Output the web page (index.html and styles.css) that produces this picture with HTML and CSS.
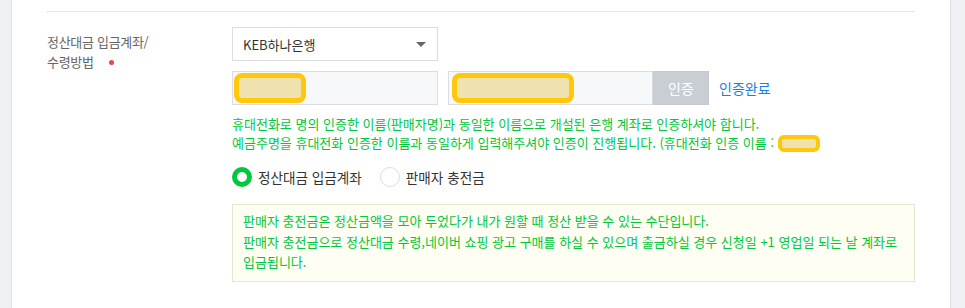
FILE: index.html
```html
<!DOCTYPE html>
<html lang="ko">
<head>
<meta charset="UTF-8">
<meta name="viewport" content="width=device-width, initial-scale=1.0">
<link rel="stylesheet" href="styles.css">
<title>정산대금 입금계좌</title>
</head>
<body>
  <div class="page">
    <div class="side side-left"></div>
    <div class="main">
      <div class="row">
        <div class="label">정산대금 입금계좌/<br>수령방법 <span class="required"></span></div>
        <div class="field">
          <div class="select">
            <span>KEB하나은행</span>
            <span class="arrow"></span>
          </div>
          <div class="account-row">
            <div class="input"><span class="mask mask-name"></span></div>
            <div class="input input-account"><span class="mask mask-account"></span></div>
            <button class="btn-verify">인증</button>
            <a class="verified" href="#">인증완료</a>
          </div>
          <p class="notice">
            휴대전화로 명의 인증한 이름(판매자명)과 동일한 이름으로 개설된 은행 계좌로 인증하셔야 합니다.<br>
            예금주명을 휴대전화 인증한 이름과 동일하게 입력해주셔야 인증이 진행됩니다. (휴대전화 인증 이름 : <span class="mask mask-inline"></span>
          </p>
          <div class="radios">
            <label class="radio checked"><span class="circle"></span>정산대금 입금계좌</label>
            <label class="radio"><span class="circle"></span>판매자 충전금</label>
          </div>
          <div class="info-box">
            판매자 충전금은 정산금액을 모아 두었다가 내가 원할 때 정산 받을 수 있는 수단입니다.<br>
            판매자 충전금으로 정산대금 수령,네이버 쇼핑 광고 구매를 하실 수 있으며 출금하실 경우 신청일 +1 영업일 되는 날 계좌로 입금됩니다.
          </div>
        </div>
      </div>
    </div>
    <div class="side side-right"></div>
  </div>
</body>
</html>
```

FILE: styles.css
```css
body {
  margin: 0;
  padding: 0;
  font-family: "Noto Sans CJK KR", "Noto Sans", sans-serif;
  background-color: #fff;
}

.page {
  display: flex;
  height: 308px;
  overflow: hidden;
}

.side {
  background-color: #eef0f4;
}

.side-left {
  width: 11px;
  border-right: 1px solid #e0e3e8;
}

.side-right {
  width: 14px;
  border-left: 1px solid #dcdfe5;
}

.main {
  flex: 1;
  padding: 0 35px;
}

.row {
  display: flex;
  margin-top: 11px;
  border-top: 1px solid #e5e5eb;
  padding-top: 15px;
}

.label {
  width: 185px;
  padding-top: 5px;
  font-size: 13px;
  line-height: 20px;
  color: #666;
  letter-spacing: -0.3px;
}

.required {
  display: inline-block;
  width: 5px;
  height: 5px;
  margin-left: 12px;
  border-radius: 50%;
  background-color: #f0434f;
  vertical-align: 2px;
}

.field {
  flex: 1;
}

.select {
  width: 206px;
  height: 34px;
  box-sizing: border-box;
  border: 1px solid #dcdde2;
  display: flex;
  align-items: center;
  justify-content: space-between;
  padding: 0 11px 0 10px;
  font-size: 13px;
  color: #333;
}

.arrow {
  width: 0;
  height: 0;
  border-left: 5px solid transparent;
  border-right: 5px solid transparent;
  border-top: 5px solid #666;
}

.account-row {
  display: flex;
  align-items: center;
  margin-top: 10px;
}

.input {
  width: 206px;
  height: 34px;
  box-sizing: border-box;
  border: 1px solid #dcdde2;
  background-color: #f7f8fa;
  display: flex;
  align-items: center;
  padding-left: 1px;
}

.input-account {
  width: 205px;
  margin-left: 10px;
  padding-left: 3px;
}

.mask {
  display: inline-block;
  box-sizing: border-box;
  border: 5px solid #ffc80a;
  background-color: #efe2ae;
  border-radius: 8px;
}

.mask-name {
  width: 72px;
  height: 30px;
}

.mask-account {
  width: 122px;
  height: 30px;
}

.mask-inline {
  width: 42px;
  height: 17px;
  border-width: 4px;
  border-radius: 6px;
  vertical-align: -4px;
}

.btn-verify {
  width: 56px;
  height: 34px;
  border: 1px solid #c5c9d1;
  background-color: #c9cdd4;
  color: #fff;
  font-family: inherit;
  font-size: 14px;
  padding: 0;
}

.verified {
  margin-left: 10px;
  font-size: 14px;
  color: #1a7fe4;
  text-decoration: none;
}

.notice {
  margin: 9px 0 0;
  font-size: 13px;
  line-height: 19px;
  color: #00c73c;
}

.radios {
  display: flex;
  margin-top: 15px;
  gap: 18px;
}

.radio {
  display: flex;
  align-items: center;
  font-size: 13.6px;
  color: #333;
}

.circle {
  width: 20px;
  height: 20px;
  box-sizing: border-box;
  border-radius: 50%;
  border: 1px solid #dcdde2;
  margin-right: 6px;
  background-color: #fff;
}

.radio.checked .circle {
  border: 5px solid #00c73c;
}

.info-box {
  margin-top: 17px;
  border: 1px solid #e6e6d0;
  background-color: #fefef3;
  padding: 6px 10px 8px;
  font-size: 13px;
  line-height: 20.5px;
  color: #00c73c;
}
```
